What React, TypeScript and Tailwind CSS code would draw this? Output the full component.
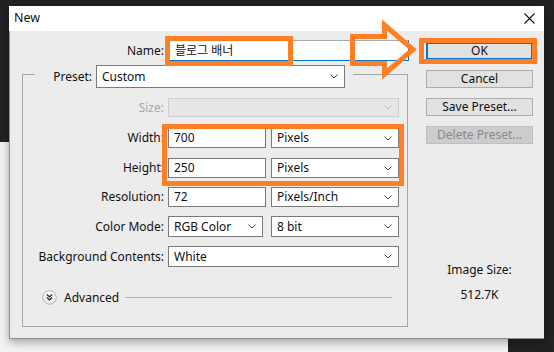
import React from 'react';

const font = { fontFamily: '"Noto Sans", "Noto Sans CJK KR", sans-serif' };

function Chevron({ disabled }: { disabled?: boolean }) {
  return (
    <svg width="8" height="5" viewBox="0 0 8 5" className="shrink-0">
      <path d="M0.5 0.5 L4 4 L7.5 0.5" fill="none" stroke={disabled ? '#b9b9b9' : '#3c3c3c'} strokeWidth="1" />
    </svg>
  );
}

function Select({ value, className }: { value: string; className: string }) {
  return (
    <div className={`flex items-center justify-between bg-white border border-[#7a7a7a] pl-[5px] pr-[6px] text-[12px] ${className}`}>
      <span className="text-[#101018]">{value}</span>
      <Chevron />
    </div>
  );
}

function Input({ value, className }: { value: string; className: string }) {
  return (
    <div className={`flex items-center bg-white border border-[#7a7a7a] pl-[5px] text-[12px] text-[#101018] ${className}`}>
      {value}
    </div>
  );
}

function Row({ label, children, className, muted }: { label: string; children: React.ReactNode; className: string; muted?: boolean }) {
  return (
    <div className={`flex items-center ${className}`}>
      <div className={`w-[141px] text-right text-[12px] ${muted ? 'text-[#a6a6a6]' : 'text-[#111]'}`}>{label}</div>
      <div className="ml-[4px] flex gap-[5px]">{children}</div>
    </div>
  );
}

function Button({ label, className }: { label: string; className: string }) {
  return (
    <div className={`flex items-center justify-center h-[18px] text-[12px] ${className}`}>{label}</div>
  );
}

export default function App() {
  return (
    <div className="relative w-[554px] h-[352px] overflow-hidden bg-[#222222] pt-[6px] pl-[9px]" style={font}>
      <div className="absolute left-0 top-[142px] w-[508px] h-[210px] bg-[#f2f2f2]" />

      <div className="relative flex flex-col w-[535px] h-[333px] shadow-[0_3px_8px_rgba(0,0,0,0.35)]">
        <div className="flex items-center justify-between h-[25px] bg-white pl-[5px] pr-[9px]">
          <span className="text-[12.5px] text-[#111]">New</span>
          <svg width="11" height="11" viewBox="0 0 11 11">
            <path d="M0.5 0.5 L10.5 10.5 M10.5 0.5 L0.5 10.5" stroke="#111" strokeWidth="1.1" />
          </svg>
        </div>

        <div className="flex flex-1 bg-[#ececec] border-l border-b border-[#8f8f8f]">
          <div className="flex flex-col w-[400px]">
            <div className="flex items-center mt-[9px] h-[21px]">
              <div className="w-[154px] text-right text-[12px] text-[#111]">Name:</div>
              <div className="ml-[5px] flex items-center w-[240px] h-[21px] bg-white border border-[#aaaaaa] border-b-[#0078d7] border-r-[#0078d7] pl-[5px] text-[12px] text-[#101018]">
                블로그 배너
              </div>
            </div>

            <div className="ml-[12px] mt-[13px] w-[386px] h-[253px] border border-[#a6a6a6] flex flex-col">
              <div className="mt-[-10px] ml-[12px] w-[318px] h-[23px] flex items-center bg-[#ececec]">
                <div className="w-[57px] text-right text-[12px] text-[#111]">Preset:</div>
                <Select value="Custom" className="ml-[4px] w-[249px] h-[23px]" />
              </div>

              <Row label="Size:" muted className="mt-[10px] h-[19px]">
                <div className="flex items-center justify-end w-[231px] h-[19px] bg-[#e6e6e6] border border-[#cfcfcf] pr-[6px]">
                  <Chevron disabled />
                </div>
              </Row>

              <Row label="Width:" className="mt-[11px] h-[20px]">
                <Input value="700" className="w-[98px] h-[20px]" />
                <Select value="Pixels" className="w-[128px] h-[20px]" />
              </Row>

              <Row label="Height:" className="mt-[10px] h-[20px]">
                <Input value="250" className="w-[98px] h-[20px]" />
                <Select value="Pixels" className="w-[128px] h-[20px]" />
              </Row>

              <Row label="Resolution:" className="mt-[9px] h-[20px]">
                <Input value="72" className="w-[98px] h-[20px]" />
                <Select value="Pixels/Inch" className="w-[128px] h-[20px]" />
              </Row>

              <Row label="Color Mode:" className="mt-[9px] h-[21px]">
                <Select value="RGB Color" className="w-[95px] h-[21px]" />
                <div className="ml-[3px]">
                  <Select value="8 bit" className="w-[128px] h-[21px]" />
                </div>
              </Row>

              <Row label="Background Contents:" className="mt-[9px] h-[21px]">
                <Select value="White" className="w-[231px] h-[21px]" />
              </Row>

              <div className="flex items-center mt-[23px] ml-[19px] h-[15px]">
                <svg width="15" height="15" viewBox="0 0 15 15" className="shrink-0">
                  <defs>
                    <linearGradient id="adv" x1="0" y1="0" x2="0" y2="1">
                      <stop offset="0" stopColor="#ffffff" />
                      <stop offset="1" stopColor="#e4e4e4" />
                    </linearGradient>
                  </defs>
                  <circle cx="7.5" cy="7.5" r="6.8" fill="url(#adv)" stroke="#b4b4b4" strokeWidth="1" />
                  <path d="M5 4.5 L7.5 7 L10 4.5 M5 7.5 L7.5 10 L10 7.5" fill="none" stroke="#222" strokeWidth="1.2" />
                </svg>
                <span className="ml-[7px] text-[12px] text-[#111]">Advanced</span>
                <div className="ml-[6px] w-[267px] h-px bg-[#b0b0b0]" />
              </div>
            </div>
          </div>

          <div className="ml-[16px] w-[107px] flex flex-col">
            <Button label="OK" className="mt-[11px] border-2 border-[#0078d7] bg-[#e1e1e1] text-[#111]" />
            <Button label="Cancel" className="mt-[10px] border border-[#adadad] bg-[#e1e1e1] text-[#111]" />
            <Button label="Save Preset..." className="mt-[10px] border border-[#adadad] bg-[#e1e1e1] text-[#111]" />
            <Button label="Delete Preset..." className="mt-[10px] border border-[#bfbfbf] bg-[#cccccc] text-[#8a8a8a]" />
            <div className="mt-[117px] text-center text-[12px] text-[#111]">Image Size:</div>
            <div className="mt-[7px] text-center text-[12px] text-[#111]">512.7K</div>
          </div>
        </div>
      </div>

      <div className="absolute left-[165px] top-[36px] w-[128px] h-[30px] border-[5px] border-[#ff7f27]" />
      <div className="absolute left-[162px] top-[124px] w-[242px] h-[62px] border-[5px] border-[#ff7f27]" />
      <div className="absolute left-[419px] top-[38px] w-[118px] h-[26px] border-[5px] border-[#ff7f27]" />
      <svg className="absolute left-0 top-0 pointer-events-none" width="554" height="352">
        <polygon
          points="352.5,36.5 384.5,36.5 384.5,25 413,49.5 384.5,74 384.5,63.5 352.5,63.5"
          fill="none"
          stroke="#ff7f27"
          strokeWidth="5"
          strokeLinejoin="miter"
        />
      </svg>
    </div>
  );
}
